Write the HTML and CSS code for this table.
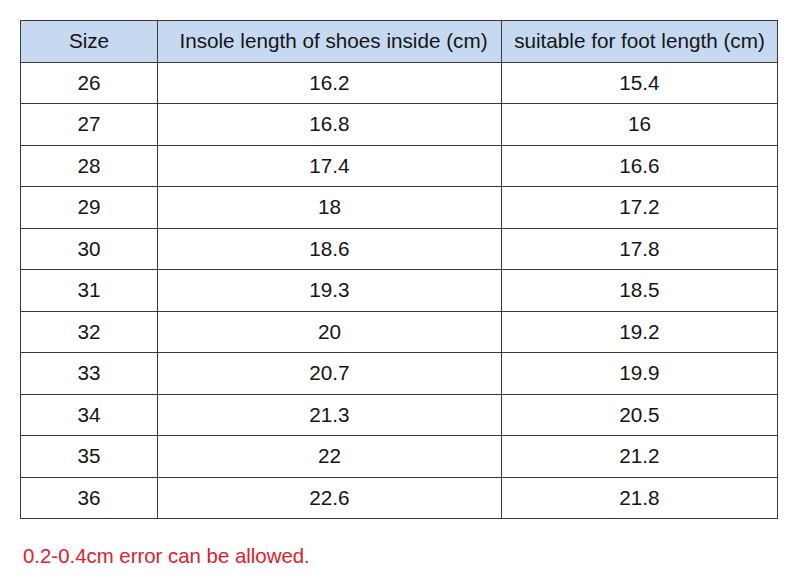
FILE: index.html
```html
<!DOCTYPE html>
<html>
<head>
<meta charset="utf-8">
<link rel="stylesheet" href="styles.css">
</head>
<body>
<div class="page">
  <table class="size-table">
    <colgroup>
      <col class="c1"><col class="c2"><col class="c3">
    </colgroup>
    <thead>
      <tr><th>Size</th><th class="shift">Insole length of shoes inside (cm)</th><th>suitable for foot length (cm)</th></tr>
    </thead>
    <tbody>
      <tr><td>26</td><td>16.2</td><td>15.4</td></tr>
      <tr><td>27</td><td>16.8</td><td>16</td></tr>
      <tr><td>28</td><td>17.4</td><td>16.6</td></tr>
      <tr><td>29</td><td>18</td><td>17.2</td></tr>
      <tr><td>30</td><td>18.6</td><td>17.8</td></tr>
      <tr><td>31</td><td>19.3</td><td>18.5</td></tr>
      <tr><td>32</td><td>20</td><td>19.2</td></tr>
      <tr><td>33</td><td>20.7</td><td>19.9</td></tr>
      <tr><td>34</td><td>21.3</td><td>20.5</td></tr>
      <tr><td>35</td><td>22</td><td>21.2</td></tr>
      <tr><td>36</td><td>22.6</td><td>21.8</td></tr>
    </tbody>
  </table>
  <p class="note">0.2-0.4cm error can be allowed.</p>
</div>
</body>
</html>
```

FILE: styles.css
```css
html, body {
  margin: 0;
  padding: 0;
  background: #ffffff;
}
.page {
  padding: 20px 0 0 20px;
  font-family: "Liberation Sans", Arial, sans-serif;
  color: #151515;
}
.size-table {
  border-collapse: collapse;
  width: 757px;
  table-layout: fixed;
}
.c1 { width: 137px; }
.c2 { width: 344px; }
.c3 { width: 276px; }
.size-table th,
.size-table td {
  border: 1.5px solid #3a3a3a;
  height: 41.5px;
  padding: 0;
  text-align: center;
  vertical-align: middle;
  font-size: 20.7px;
  font-weight: normal;
  box-sizing: border-box;
}
.size-table th {
  background: #c6d9f0;
}
.size-table th.shift {
  padding-left: 8px;
}
.note {
  margin: 26px 0 0 3px;
  color: #e0202a;
  font-size: 20.4px;
}
```
